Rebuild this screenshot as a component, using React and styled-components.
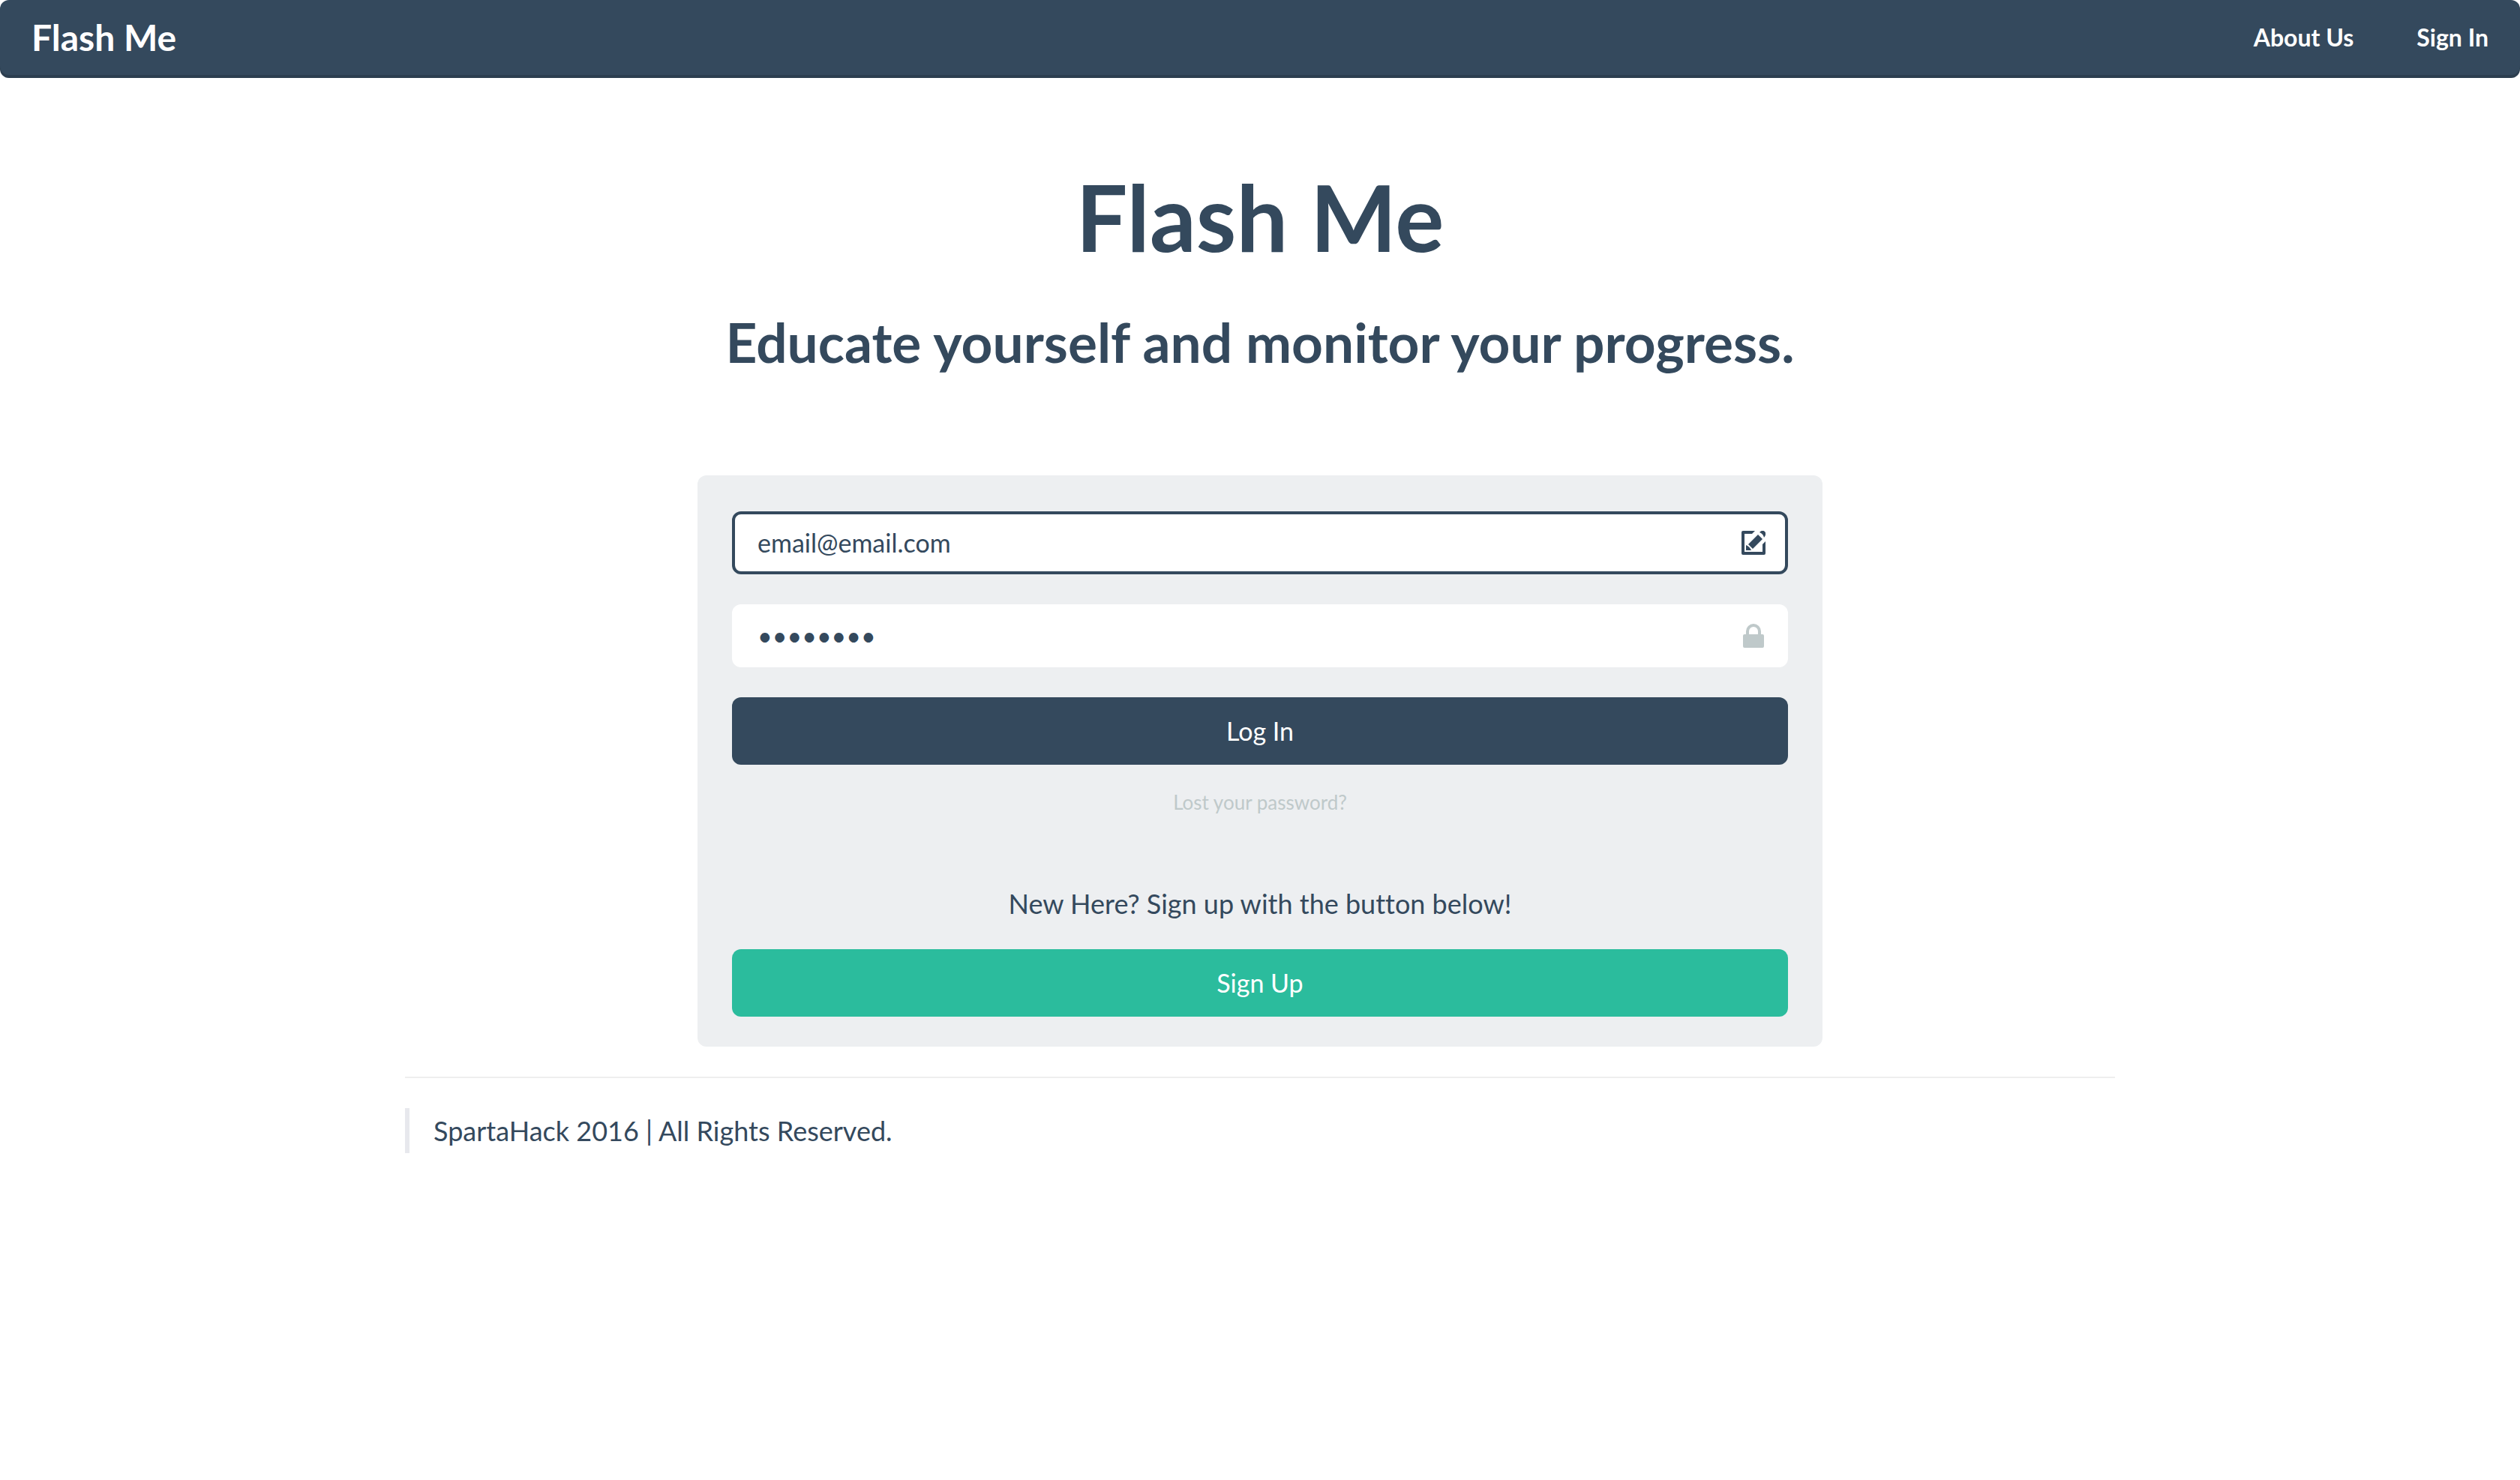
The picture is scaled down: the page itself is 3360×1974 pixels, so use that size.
import React from 'react';
import styled, { createGlobalStyle } from 'styled-components';

const navy = '#34495d';

const GlobalStyle = createGlobalStyle`
  *, *::before, *::after { box-sizing: border-box; }
  body {
    margin: 0;
    background: #fff;
    color: ${navy};
    font-family: Lato, "Liberation Sans", sans-serif;
    font-size: 36px;
    font-variant-ligatures: none;
    line-height: 62px;
  }
`;

const Navbar = styled.header`
  display: flex;
  align-items: center;
  justify-content: space-between;
  height: 104px;
  padding: 0 42px 4px;
  border-radius: 12px;
  background: ${navy};
  box-shadow: inset 0 -4px 0 rgba(0, 0, 0, 0.15);
`;

const Brand = styled.a`
  color: #fff;
  font-size: 48px;
  font-weight: 700;
  text-decoration: none;
`;

const NavLinks = styled.nav`
  display: flex;
  gap: 84px;
`;

const NavLink = styled.a`
  color: #fff;
  font-size: 32px;
  font-weight: 700;
  text-decoration: none;
`;

const Container = styled.div`
  max-width: 2280px;
  margin: 0 auto;
`;

const Hero = styled.section`
  display: flex;
  flex-direction: column;
  gap: 56px;
  padding: 118px 0 134px;
  text-align: center;
`;

const Title = styled.h1`
  margin: 0;
  font-size: 122px;
  font-weight: 700;
  line-height: 134px;
`;

const Subtitle = styled.h2`
  margin: 0;
  font-size: 73px;
  font-weight: 700;
  line-height: 88px;
`;

const LoginForm = styled.form`
  display: flex;
  flex-direction: column;
  gap: 40px;
  max-width: 1500px;
  margin: 0 auto;
  padding: 48px 46px 40px;
  border-radius: 12px;
  background: #edeff1;
`;

const Field = styled.label`
  display: flex;
  align-items: center;
  height: 84px;
  padding: 0 26px 0 30px;
  border: 4px solid ${(p) => (p.$active ? navy : '#fff')};
  border-radius: 12px;
  background: #fff;
  color: ${(p) => (p.$active ? navy : '#bfc9ca')};
`;

const Input = styled.input`
  flex: 1;
  min-width: 0;
  padding: 0;
  border: 0;
  outline: 0;
  background: transparent;
  color: ${navy};
  font: inherit;
  font-size: 34px;
  line-height: 50px;
`;

const Icon = styled.svg`
  width: 32px;
  height: 32px;
  fill: currentColor;
`;

const Button = styled.button`
  width: 100%;
  padding: 20px;
  border: 0;
  border-radius: 12px;
  background: ${(p) => (p.$primary ? '#2bbc9d' : navy)};
  color: #fff;
  font: inherit;
  font-size: 34px;
  line-height: 50px;
`;

const LostLink = styled.a`
  color: #bfc9ca;
  font-size: 26px;
  line-height: 40px;
  text-align: center;
  text-decoration: none;
`;

const Actions = styled.div`
  display: flex;
  flex-direction: column;
  gap: 30px;
`;

const SignUp = styled(Actions)`
  padding-top: 44px;
`;

const Prompt = styled.p`
  margin: 0;
  text-align: center;
`;

const Divider = styled.hr`
  margin: 40px 0;
  border: 0;
  border-top: 2px solid #eee;
`;

const Footer = styled.footer`
  padding-left: 32px;
  border-left: 6px solid #e7e8ed;
  line-height: 60px;
`;

export default function App() {
  return (
    <>
      <GlobalStyle />
      <Navbar>
        <Brand href="#">Flash Me</Brand>
        <NavLinks>
          <NavLink href="#about">About Us</NavLink>
          <NavLink href="#signin">Sign In</NavLink>
        </NavLinks>
      </Navbar>
      <Container>
        <Hero>
          <Title>Flash Me</Title>
          <Subtitle>Educate yourself and monitor your progress.</Subtitle>
        </Hero>
        <LoginForm>
          <Field $active>
            <Input type="email" aria-label="Email" defaultValue="email@email.com" />
            <Icon viewBox="0 0 32 32" aria-hidden="true">
              <path d="M2 0H18L14 4H4V28H28V18L32 14V30Q32 32 30 32H2Q0 32 0 30V2Q0 0 2 0Z" />
              <path d="M22 5L28 11L15 24L9 18Z" />
              <path d="M24 2Q28-2 31 1Q34 4 30 9Q29 4 24 2Z" />
              <path d="M6 19Q11 21 13 26H6Z" />
            </Icon>
          </Field>
          <Field>
            <Input type="password" aria-label="Password" defaultValue="password" />
            <Icon viewBox="0 0 32 32" aria-hidden="true">
              <path d="M6 14V10A10 10 0 0 1 26 10V14H28Q30 14 30 16V30Q30 32 28 32H4Q2 32 2 30V16Q2 14 4 14ZM10 14H22V10A6 6 0 0 0 10 10Z" />
            </Icon>
          </Field>
          <Actions>
            <Button type="button">Log In</Button>
            <LostLink href="#lost">Lost your password?</LostLink>
          </Actions>
          <SignUp>
            <Prompt>New Here? Sign up with the button below!</Prompt>
            <Button type="button" $primary>Sign Up</Button>
          </SignUp>
        </LoginForm>
        <Divider />
        <Footer>SpartaHack 2016 | All Rights Reserved.</Footer>
      </Container>
    </>
  );
}
